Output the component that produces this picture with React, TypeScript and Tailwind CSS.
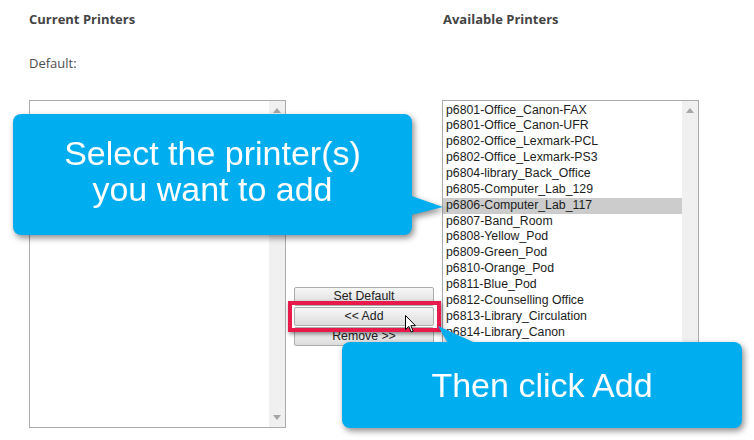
import React from "react";

const printers = [
  "p6801-Office_Canon-FAX",
  "p6801-Office_Canon-UFR",
  "p6802-Office_Lexmark-PCL",
  "p6802-Office_Lexmark-PS3",
  "p6804-library_Back_Office",
  "p6805-Computer_Lab_129",
  "p6806-Computer_Lab_117",
  "p6807-Band_Room",
  "p6808-Yellow_Pod",
  "p6809-Green_Pod",
  "p6810-Orange_Pod",
  "p6811-Blue_Pod",
  "p6812-Counselling Office",
  "p6813-Library_Circulation",
  "p6814-Library_Canon",
];

function ScrollTrack() {
  return (
    <div className="w-[16px] shrink-0 bg-[#f0f0f0] flex flex-col justify-between items-center py-[7px]">
      <svg width="8" height="5" viewBox="0 0 8 5">
        <polygon points="0,5 8,5 4,0" fill="#a6a6a6" />
      </svg>
      <svg width="8" height="5" viewBox="0 0 8 5">
        <polygon points="0,0 8,0 4,5" fill="#a6a6a6" />
      </svg>
    </div>
  );
}

function Btn({ label }: { label: string }) {
  return (
    <div className="h-[19px] w-[140px] rounded-[2px] border border-[#adadad] bg-gradient-to-b from-[#f7f7f7] to-[#dddddd] flex items-center justify-center text-[12.3px] text-[#222] font-['Liberation_Sans',Arial,sans-serif]">
      {label}
    </div>
  );
}

export default function App() {
  return (
    <div className="relative w-[754px] h-[440px] overflow-hidden bg-white font-['Open_Sans',sans-serif]">
      <div className="flex pl-[29px] pt-[10px]">
        {/* Left column */}
        <div className="w-[257px] flex flex-col">
          <div className="text-[13px] leading-[18px] font-bold text-[#444]">Current Printers</div>
          <div className="mt-[26px] text-[13px] leading-[18px] text-[#4d4d4d]">Default:</div>
          <div className="mt-[28px] h-[328px] border border-[#ababab] flex bg-white">
            <div className="flex-1" />
            <ScrollTrack />
          </div>
        </div>

        {/* Middle column */}
        <div className="w-[156px] pl-[8px] pt-[276.5px] flex flex-col gap-[1px]">
          <Btn label="Set Default" />
          <Btn label="<< Add" />
          <Btn label="Remove >>" />
        </div>

        {/* Right column */}
        <div className="w-[257px] flex flex-col">
          <div className="text-[13px] leading-[18px] font-bold text-[#444] pl-[1px]">Available Printers</div>
          <div className="mt-[72px] h-[328px] border border-[#ababab] flex bg-white overflow-hidden">
            <div className="flex-1 flex flex-col pt-[1.5px] font-['Liberation_Sans',Arial,sans-serif] text-[12.3px] text-[#1c1c1c]">
              {printers.map((p, i) => (
                <div
                  key={p}
                  className={
                    i === 6
                      ? "h-[15.86px] leading-[15.86px] pl-[3px] bg-[#cccccc] shrink-0"
                      : "h-[15.86px] leading-[15.86px] pl-[3px] shrink-0"
                  }
                >
                  {p}
                </div>
              ))}
            </div>
            <ScrollTrack />
          </div>
        </div>
      </div>

      {/* Red highlight around Add */}
      <div className="absolute left-[288px] top-[301px] w-[153px] h-[31px] border-[4px] border-[#e8194b] shadow-[1px_2px_4px_rgba(0,0,0,0.45)]" />

      {/* Cursor */}
      <svg className="absolute left-[405px] top-[315px]" width="12" height="19" viewBox="0 0 12 19">
        <path d="M0.5,0.5 L0.5,14.5 L3.8,11.4 L6.2,17 L8.2,16.1 L5.9,10.7 L10.5,10.7 Z" fill="#fff" stroke="#000" strokeWidth="1" strokeLinejoin="round" />
      </svg>

      {/* Callout 1 */}
      <div className="absolute left-[13px] top-[114px] w-[440px] h-[121px] drop-shadow-[2px_3px_3px_rgba(0,0,0,0.45)]">
        <svg className="absolute left-0 top-0" width="440" height="121" viewBox="0 0 440 121">
          <polygon points="390,79 430,93 390,103" fill="#00aeef" />
        </svg>
        <div className="absolute left-0 top-0 w-[399px] h-[121px] rounded-[8px] bg-[#00aeef] flex items-center justify-center pb-[8px]">
          <div className="text-center text-white text-[34px] leading-[36px] font-['Liberation_Sans',Arial,sans-serif]">
            Select the printer(s)
            <br />
            you want to add
          </div>
        </div>
      </div>

      {/* Callout 2 */}
      <div className="absolute left-[342px] top-[325px] w-[400px] h-[103px] drop-shadow-[2px_3px_3px_rgba(0,0,0,0.45)]">
        <svg className="absolute left-0 top-0" width="400" height="30" viewBox="0 0 400 30">
          <polygon points="96,1 142,22 108,22" fill="#00aeef" />
        </svg>
        <div className="absolute left-0 top-[17px] w-[400px] h-[86px] rounded-[8px] bg-[#00aeef] flex items-center justify-center">
          <div className="text-white text-[34px] leading-[36px] font-['Liberation_Sans',Arial,sans-serif]">Then click Add</div>
        </div>
      </div>
    </div>
  );
}
